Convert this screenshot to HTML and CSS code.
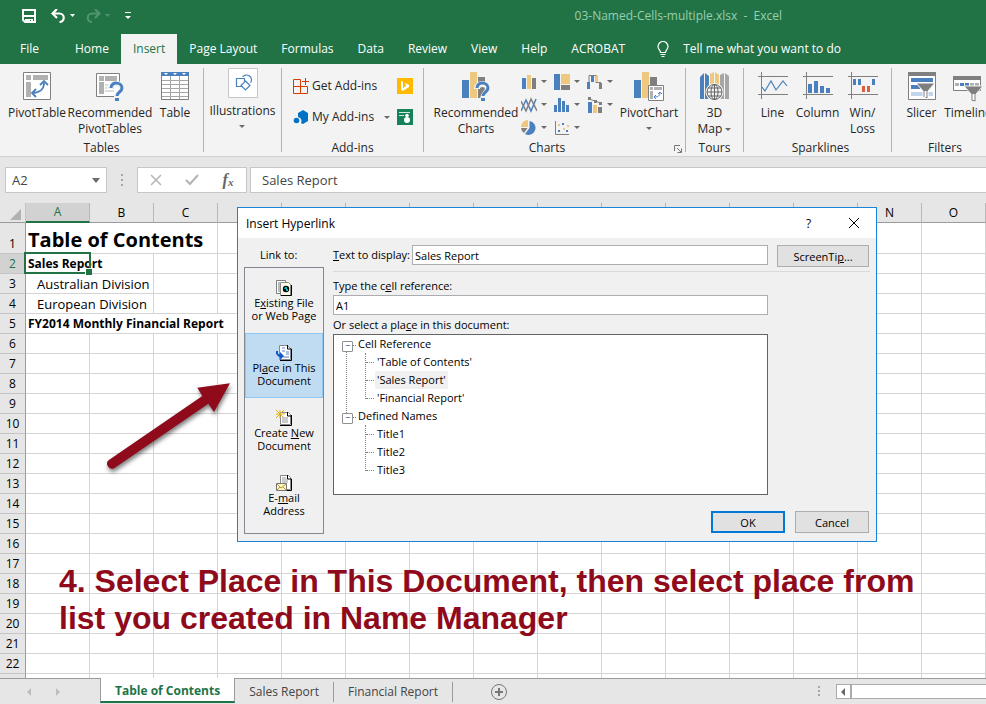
FILE: index.html
```html
<!DOCTYPE html>
<html lang="en">
<head>
<meta charset="utf-8">
<title>03-Named-Cells-multiple.xlsx - Excel</title>
<link rel="stylesheet" href="styles.css">
</head>
<body>
<div class="app">
<header class="titlebar">
  <div class="quick">
    <button aria-label="Save"><svg width="14" height="14"><path d="M1 1h12v12H3l-2-2z" fill="none" stroke="#fff" stroke-width="2"/><path d="M1 7h12" stroke="#fff" stroke-width="2"/><path d="M3 14v-4h8v4h-2v-3H8v3z" fill="#fff"/></svg></button>
    <button class="undo" aria-label="Undo"><svg width="25" height="14"><path d="M6 0L1.500 4.500 6 9M2 4.500h6.500a4 4 0 0 1 0 8.500" fill="none" stroke="#fff" stroke-width="2.200"/><path d="M19 5h5l-2.500 3z" fill="#fff"/></svg></button>
    <button class="redo" aria-label="Redo"><svg width="25" height="14"><path d="M9 0l4.500 4.500L9 9M13 4.500H6a4 4 0 0 0 0 8.500" fill="none" stroke="#4f9470" stroke-width="2.200"/><path d="M19 5h5l-2.500 3z" fill="#4f9470"/></svg></button>
    <button class="more" aria-label="Customize Quick Access Toolbar"><svg width="6" height="8"><path d="M0 .5h6" stroke="#fff"/><path d="M0 4h6L3 7z" fill="#fff"/></svg></button>
  </div>
  <div class="doc-name">03-Named-Cells-multiple.xlsx&nbsp; -&nbsp; Excel</div>
</header>
<nav class="tabs">
  <button class="file">File</button><button>Home</button><button class="active">Insert</button><button>Page Layout</button><button>Formulas</button><button>Data</button><button>Review</button><button>View</button><button>Help</button><button>ACROBAT</button>
  <button class="tell"><svg width="12" height="17" fill="none" stroke="#fff" stroke-width="1.200"><path d="M3.500 11.500C3.500 9 1 8.500 1 5.500a5 5 0 0 1 10 0c0 3-2.500 3.500-2.500 6zM3.500 13.500h5M4.500 15.500h3"/></svg>Tell me what you want to do</button>
</nav>

<section class="ribbon">
  <div class="group tables">
    <div class="tools">
      <button class="big w58"><svg width="28" height="28"><path d="M.5.5h27v27H.5z" fill="#fff" stroke="#7f7f7f"/><path d="M3 3h5v5H3zM10 3h15v5H10zM3 10h5v15H3z" fill="#b1b1b1"/><path d="M10 21c8-1 11-4 11-10M13 17l-4 4 4 4M17 13l4-4 4 4" fill="none" stroke="#4a80bd" stroke-width="1.800"/></svg><span>PivotTable</span></button>
      <button class="big w88"><svg width="28" height="29"><path d="M.5 1.500h23v23H.500z" fill="#fff" stroke="#7f7f7f"/><path d="M3 4h5v5H3zM9 4h12v5H9zM3 10h5v12H3z" fill="#b1b1b1"/><path d="M9 13h9M9 16h9M9 19h9" stroke="#bbb"/><path d="M14 17c0-7 12-7 12 0 0 4-5 3-5 8" fill="none" stroke="#f3f3f3" stroke-width="6"/><path d="M15 16c0-7 11-6 11 0 0 4-5 4-5 8" fill="none" stroke="#4a80bd" stroke-width="3"/><path d="M19 26h4v3h-4z" fill="#4a80bd"/></svg><span>Recommended<br>PivotTables</span></button>
      <button class="big w42"><svg width="28" height="28"><path d="M.5.5h27v27H.500z" fill="#fff" stroke="#7f7f7f"/><path d="M1 8.500h26M1 12.500h26M1 16.500h26M1 20.500h26M1 24.500h26M9.500 4v23M18.500 4v23" stroke="#a6a6a6"/><path d="M0 0h28v4H0z" fill="#4a80bd"/><path d="M3 1h4L5 3zM12 1h4l-2 2zM21 1h4l-2 2z" fill="#fff"/></svg><span>Table</span></button>
    </div>
    <div class="caption">Tables</div>
  </div>
  <div class="group illus">
    <div class="tools">
      <button class="big boxed"><svg width="30" height="30"><path d="M.5.5h29v29H.5z" fill="#fff" stroke="#c6c6c6"/><g fill="none" stroke="#4a80bd" stroke-width="1.200"><path d="M14 18.500H8.500v-8h8v3M14.500 9a5 5 0 1 1 8 6M17.500 13l4.500 4.500-4.500 4.500-4.500-4.500z"/></g></svg><span>Illustrations<i class="caret block"></i></span></button>
    </div>
  </div>
  <div class="group addins">
    <div class="tools">
      <div class="rows">
        <button><svg width="16" height="16" fill="none" stroke="#d83b01"><path d="M.5 1.500h7v14h-7zM.5 8.500h14v7h-7M12.500 0v7M9 3.500h7"/></svg>Get Add-ins</button>
        <button><svg width="16" height="16"><path d="M5 4l5-3 5 3v8l-5 3-2-1a4 4 0 0 0-3-6z" fill="#0072c6"/><circle cx="3.500" cy="11.500" r="2.800" fill="#0072c6"/></svg>My Add-ins<i class="caret"></i></button>
      </div>
      <div class="rows icons">
        <button aria-label="Bing Maps"><svg width="16" height="16"><path d="M0 0h16v16H0z" fill="#ffb900"/><path d="M4 3l2 1v6l3-2-1-3 4 2v2l-6 4-2-1z" fill="#fff"/></svg></button>
        <button aria-label="People Graph"><svg width="16" height="16"><path d="M0 0h16v16H0z" fill="#168259"/><path d="M2 3.500h11M2 6.500h5" stroke="#cfe8dc"/><circle cx="10" cy="6.500" r="1.800" fill="#fff"/><circle cx="10" cy="11" r="3" fill="#fff"/></svg></button>
      </div>
    </div>
    <div class="caption">Add-ins</div>
  </div>
  <div class="group charts">
    <div class="tools">
      <button class="big w90"><svg width="28" height="29"><path d="M0 8h7v18H0z" fill="#4a80bd"/><path d="M8 0h7v26H8z" fill="#edc87e"/><path d="M16 5h7v21h-7z" fill="#7f7f7f"/><path d="M15 17c0-7 11-6 11 0 0 4-5 3-5 12" fill="none" stroke="#f3f3f3" stroke-width="6"/><path d="M15 16c0-7 11-6 11 0 0 4-5 4-5 8" fill="none" stroke="#4a80bd" stroke-width="3"/><path d="M19 26h4v3h-4z" fill="#4a80bd"/></svg><span>Recommended<br>Charts</span></button>
      <div class="chart-grid">
        <button aria-label="Column chart"><svg width="16" height="16"><path d="M1 4h4v11H1z" fill="#4a80bd"/><path d="M6 1h4v14H6z" fill="#edc87e"/><path d="M11 4h4v11h-4z" fill="#7f7f7f"/></svg><i class="caret"></i></button>
        <button aria-label="Hierarchy chart"><svg width="16" height="16"><path d="M0 0h6v16H0z" fill="#4a80bd"/><path d="M7 0h9v10H7z" fill="#edc87e"/><path d="M7 11h9v5H7z" fill="#7f7f7f"/></svg><i class="caret"></i></button>
        <button aria-label="Waterfall chart"><svg width="16" height="16"><path d="M0 8h3v7H0zM4 1h3v7H4z" fill="#4a80bd"/><path d="M8 1h3v8H8z" fill="#edc87e"/><path d="M12 9h3v6h-3z" fill="#7f7f7f"/><path d="M2 8V1.500h7M9 8.500h5" stroke="#7f7f7f" fill="none"/></svg><i class="caret"></i></button>
        <button aria-label="Line chart"><svg width="16" height="16" fill="none"><path d="M0 14L5 3l5 11 5-12" stroke="#4a80bd" stroke-width="1.500"/><path d="M0 4l5 10 5-12 6 12" stroke="#7f7f7f" stroke-width="1.500"/></svg><i class="caret"></i></button>
        <button aria-label="Statistic chart"><svg width="16" height="16"><path d="M0 8h3v7H0zM4 1h3v14H4zM8 4h3v11H8zM12 8h3v7h-3z" fill="#4a80bd"/></svg><i class="caret"></i></button>
        <button aria-label="Combo chart"><svg width="16" height="16"><path d="M1 5h4v11H1z" fill="#4a80bd"/><path d="M6 8h4v8H6z" fill="#edc87e"/><path d="M11 10h4v6h-4z" fill="#7f7f7f"/><path d="M2 2l6 2 6 2" stroke="#7f7f7f"/><path d="M1 0h3v3H1zM7 3h3v3H7zM12 5h3v3h-3z" fill="#7f7f7f"/></svg><i class="caret"></i></button>
        <button aria-label="Pie chart"><svg width="16" height="16"><path d="M8.500 1v7L4 14a7 7 0 1 0 4.500-13z" fill="#4a80bd"/><path d="M7 0v7H0a7 7 0 0 1 7-7z" fill="#edc87e"/><path d="M0 8h6.500L3 13a7 7 0 0 1-3-5z" fill="#7f7f7f"/></svg><i class="caret"></i></button>
        <button aria-label="Scatter chart"><svg width="16" height="16"><path d="M1.500 1v13.500H15" stroke="#7f7f7f" fill="none"/><path d="M4 4h2v2H4zM9 8h2v2H9zM13 5h2v2h-2z" fill="#edc87e"/><path d="M4 10h2v2H4zM8 3h2v2H8zM12 10h2v2h-2z" fill="#4a80bd"/></svg><i class="caret"></i></button>
      </div>
      <button class="big w58"><svg width="30" height="29"><path d="M0 8h7v18H0z" fill="#4a80bd"/><path d="M8 0h7v26H8z" fill="#edc87e"/><path d="M16 5h7v8h-7z" fill="#7f7f7f"/><path d="M14.500 13.500h15v15h-15z" fill="#fff" stroke="#7f7f7f"/><path d="M16 15h3v3h-3zM20 15h8v3h-8zM16 19h3v8h-3z" fill="#b1b1b1"/><path d="M20 25c4 0 6-1 6-5M22 23l-2 2 2 2M24 22l2-2 2 2" fill="none" stroke="#4a80bd"/></svg><span>PivotChart<i class="caret block"></i></span></button>
    </div>
    <div class="caption">Charts</div>
    <button class="launcher" aria-label="See All Charts"><svg width="8" height="8" fill="none" stroke="#777"><path d="M.5 6V.5H6M3 3l4 4M7.500 3.500v4h-4"/></svg></button>
  </div>
  <div class="group tours">
    <div class="tools">
      <button class="big w58"><svg width="30" height="29"><path d="M0 5l4-4v26H0zM5 1l4 3v23H5z" fill="#4a80bd"/><path d="M10 2l4-2v27h-4zM15 0l4 3v24h-4z" fill="#edc87e"/><path d="M20 3l4-2v26h-4zM25 1l4 3v23h-4z" fill="#a6a6a6"/><circle cx="14.500" cy="20" r="9" fill="#f3f3f3"/><g fill="none" stroke="#666"><circle cx="14.500" cy="20" r="7.500"/><ellipse cx="14.500" cy="20" rx="3.500" ry="7.500"/><path d="M7 20h15M8 16h13M8 24h13M14.500 12v16"/></g></svg><span>3D<br>Map <i class="caret"></i></span></button>
    </div>
    <div class="caption">Tours</div>
  </div>
  <div class="group spark">
    <div class="tools">
      <button class="big w45"><svg width="30" height="28"><path d="M0 4.500h30M0 22.500h30M3.500 0v27" stroke="#7f7f7f"/><path d="M4 15l3 4 6-10 5 9 7-9 4 5" fill="none" stroke="#4a80bd" stroke-width="1.200"/></svg><span>Line</span></button>
      <button class="big w45"><svg width="30" height="28"><path d="M0 4.500h30M0 22.500h30M3.500 0v27" stroke="#7f7f7f"/><path d="M5 12h4v9H5zM11 9h4v12h-4zM17 14h4v7h-4zM23 16h4v5h-4z" fill="#4a80bd"/></svg><span>Column</span></button>
      <button class="big w45"><svg width="30" height="28"><path d="M0 4.500h30M0 22.500h30M3.500 0v27" stroke="#7f7f7f"/><path d="M5 7h3v6H5zM10 7h3v6h-3zM24 7h3v6h-3z" fill="#4a80bd"/><path d="M14 14h3v6h-3zM19 14h3v6h-3z" fill="#d9603f"/></svg><span>Win/<br>Loss</span></button>
    </div>
    <div class="caption">Sparklines</div>
  </div>
  <div class="group filters">
    <div class="tools">
      <button class="big w45"><svg width="28" height="28"><path d="M.5.5h27v27H.500z" fill="#fff" stroke="#7f7f7f"/><path d="M0 0h28v4H0z" fill="#7f7f7f"/><path d="M3 6h22v4H3zM3 13h9v4H3z" fill="#4a80bd"/><path d="M3 20h22v4H3z" fill="#c3d5ea"/><path d="M8 11h19l-7 8v8l-5-2v-6z" fill="#7f7f7f" stroke="#fff"/><path d="M16.500 19h2v6h-2z" fill="#fff"/></svg><span>Slicer</span></button>
      <button class="big w48"><svg width="30" height="30"><path d="M.5 4.500h27v14H.500z" fill="#fff" stroke="#7f7f7f"/><path d="M0 4h28v4H0z" fill="#7f7f7f"/><path d="M2 11h4v3H2zM17 11h4v3h-4zM22 11h4v3h-4z" fill="#b1b1b1"/><path d="M7 11h4v3H7zM12 11h4v3h-4z" fill="#4a80bd"/><path d="M11 14h19l-7 8v8l-5-1v-7z" fill="#7f7f7f" stroke="#f3f3f3"/><path d="M19.500 22h2v6h-2z" fill="#fff"/></svg><span>Timeline</span></button>
    </div>
    <div class="caption">Filters</div>
  </div>
</section>

<section class="formula">
  <div class="name-box"><input aria-label="Name Box" value="A2"><button aria-label="Names"><i class="caret wide"></i></button></div>
  <svg class="grip" width="3" height="12"><path d="M0 0h2v2H0zM0 5h2v2H0zM0 10h2v2H0z" fill="#a6a6a6"/></svg>
  <div class="fx-box">
    <button aria-label="Cancel entry"><svg width="12" height="12"><path d="M1 1l10 10M11 1L1 11" stroke="#b4b4b4" stroke-width="1.500"/></svg></button>
    <button aria-label="Enter"><svg width="14" height="12"><path d="M1 6l4 4 8-9" fill="none" stroke="#b4b4b4" stroke-width="2"/></svg></button>
    <button class="fx" aria-label="Insert Function">f<small>x</small></button>
  </div>
  <input class="formula-input" aria-label="Formula Bar" value="Sales Report">
</section>

<main class="sheet">
<table>
<thead><tr><th class="corner"><svg width="11" height="11"><path d="M11 0v11H0z" fill="#b1b1b1"/></svg></th>
<th class="sel">A</th><th>B</th><th>C</th><th></th><th></th>
<th></th><th></th><th></th><th></th><th></th>
<th></th><th></th><th></th><th>N</th><th>O</th></tr></thead>
<tbody>
<tr class="first"><th>1</th><td colspan="3" class="title">Table of Contents</td><td><td> <td><td><td><td><td> <td><td><td><td><td></tr>
<tr><th class="sel">2</th><td colspan="2" class="bold current">Sales Report<span class="cursor"></span></td><td><td><td> <td><td><td><td><td> <td><td><td><td><td></tr>
<tr><th>3</th><td colspan="2" class="indent">Australian Division</td><td><td><td> <td><td><td><td><td> <td><td><td><td><td></tr>
<tr><th>4</th><td colspan="2" class="indent">European Division</td><td><td><td> <td><td><td><td><td> <td><td><td><td><td></tr>
<tr><th>5</th><td colspan="4" class="bold">FY2014 Monthly Financial Report</td><td> <td><td><td><td><td> <td><td><td><td><td></tr>
<tr><th>6</th><td><td><td><td><td> <td><td><td><td><td> <td><td><td><td><td></tr>
<tr><th>7</th><td><td><td><td><td> <td><td><td><td><td> <td><td><td><td><td></tr>
<tr><th>8</th><td><td><td><td><td> <td><td><td><td><td> <td><td><td><td><td></tr>
<tr><th>9</th><td><td><td><td><td> <td><td><td><td><td> <td><td><td><td><td></tr>
<tr><th>10</th><td><td><td><td><td> <td><td><td><td><td> <td><td><td><td><td></tr>
<tr><th>11</th><td><td><td><td><td> <td><td><td><td><td> <td><td><td><td><td></tr>
<tr><th>12</th><td><td><td><td><td> <td><td><td><td><td> <td><td><td><td><td></tr>
<tr><th>13</th><td><td><td><td><td> <td><td><td><td><td> <td><td><td><td><td></tr>
<tr><th>14</th><td><td><td><td><td> <td><td><td><td><td> <td><td><td><td><td></tr>
<tr><th>15</th><td><td><td><td><td> <td><td><td><td><td> <td><td><td><td><td></tr>
<tr><th>16</th><td><td><td><td><td> <td><td><td><td><td> <td><td><td><td><td></tr>
<tr><th>17</th><td><td><td><td><td> <td><td><td><td><td> <td><td><td><td><td></tr>
<tr><th>18</th><td><td><td><td><td> <td><td><td><td><td> <td><td><td><td><td></tr>
<tr><th>19</th><td><td><td><td><td> <td><td><td><td><td> <td><td><td><td><td></tr>
<tr><th>20</th><td><td><td><td><td> <td><td><td><td><td> <td><td><td><td><td></tr>
<tr><th>21</th><td><td><td><td><td> <td><td><td><td><td> <td><td><td><td><td></tr>
<tr><th>22</th><td><td><td><td><td> <td><td><td><td><td> <td><td><td><td><td></tr>
<tr><th></th><td><td><td><td><td> <td><td><td><td><td> <td><td><td><td><td></tr>
</tbody>
</table>

<p class="note">4. Select Place in This Document, then select place from<br>list you created in Name Manager</p>
<svg class="arrow" width="140" height="110"><path d="M8.900 89L102.300 25l-5-8.300 32.700-4.400L114 41l-5.700-8.300L14.500 97A4.900 4.900 0 0 1 8.900 89z" fill="#8f0a1a"/></svg>

<form class="dialog">
  <div class="dlg-title"><span>Insert Hyperlink</span><button type="button" class="help" aria-label="Help">?</button><button type="button" aria-label="Close"><svg width="12" height="12"><path d="M1 1l10 10M11 1L1 11" stroke="#000"/></svg></button></div>
  <div class="dlg-body">
    <div class="link-col">
      <div class="link-label">Link to:</div>
      <div class="link-list">
        <button type="button"><svg width="16" height="16"><path d="M.5.5h9v13h-9z" fill="#fff" stroke="#808080"/><path d="M2 3h2M2 5h2M2 7h2M2 9h2M2 11h2" stroke="#777"/><path d="M4.500 2.500h8l2 2v11h-10z" fill="#fffbe8" stroke="#888"/><path d="M15.500 5v10.500H5" stroke="#000" fill="none"/><circle cx="10" cy="9" r="3.200" fill="#000"/><path d="M9 7h2v2h1v2h-2V9H8z" fill="#16b8c8"/></svg>E<u>x</u>isting File<br>or Web Page</button>
        <button type="button" class="chosen"><svg width="16" height="16"><path d="M3.500.5h8l3 3v11h-11z" fill="#fff" stroke="#888"/><path d="M15.500 4v11.500H4M11.500 0v4h4" stroke="#000" fill="none"/><path d="M6 3h3M6 6h3M10 7h3M10 9h3M7 12h6" stroke="#5b7ec8"/><path d="M0 6h2v3h2V7l4 4-4 4v-3H3l-3-3z" fill="#1757c8"/></svg>Pl<u>a</u>ce in This<br>Document</button>
        <button type="button"><svg width="16" height="16"><path d="M4.500 2.500h8l2 2v10h-10z" fill="#fff" stroke="#888"/><path d="M15.500 5v10.500H4M11.500 2v4h4" stroke="#000" fill="none"/><path d="M6 8h6M6 10h6M6 12h6" stroke="#999"/><path d="M0 0l8 8M8 0L0 8M4 0v8M0 4h9" stroke="#d9b018"/></svg>Create <u>N</u>ew<br>Document</button>
        <button type="button"><svg width="16" height="16"><path d="M4.500.5h8l2 2v12h-10z" fill="#fff" stroke="#888"/><path d="M15.500 4v11.500H4M11.500 0v4h4" stroke="#000" fill="none"/><path d="M6 3h4M6 5h6M6 7h6" stroke="#999"/><path d="M.5 8.500h10v7H.5z" fill="#fff4c0" stroke="#777"/><path d="M1 9l4 4 5-4M1 15l3-3M10 15l-3-3" fill="none" stroke="#bb9a35"/></svg>E-<u>m</u>ail<br>Address</button>
      </div>
    </div>
    <div class="main-col">
      <div class="display-row"><label for="disp"><u>T</u>ext to display:</label><input id="disp" value="Sales Report"><button type="button">ScreenTi<u>p</u>...</button></div>
      <div class="fields">
        <label for="ref">Type the c<u>e</u>ll reference:</label>
        <input id="ref" value="A1">
        <div class="place-label" id="place">Or select a pla<u>c</u>e in this document:</div>
        <ul class="tree" role="tree" aria-labelledby="place">
          <li role="treeitem" class="branch"><span>Cell Reference</span>
            <ul role="group"><li role="treeitem"><span>'Table of Contents'</span></li><li role="treeitem"><span class="picked">'Sales Report'</span></li><li role="treeitem"><span>'Financial Report'</span></li></ul></li>
          <li role="treeitem" class="branch"><span>Defined Names</span>
            <ul role="group"><li role="treeitem"><span>Title1</span></li><li role="treeitem"><span>Title2</span></li><li role="treeitem"><span>Title3</span></li></ul></li>
        </ul>
      </div>
      <div class="actions"><button type="button" class="ok">OK</button><button type="button">Cancel</button></div>
    </div>
  </div>
</form>
</main>

<footer class="sheetbar">
  <div class="nav"><svg width="34" height="8"><path d="M4 0v8L0 4zM29 0v8l4-4z" fill="#bdbdbd"/></svg></div>
  <button class="active">Table of Contents</button><button>Sales Report</button><button>Financial Report</button>
  <button class="add" aria-label="New sheet"><svg width="16" height="16" fill="none" stroke="#777"><circle cx="8" cy="8" r="7.500"/><path d="M4 8h8M8 4v8" stroke-width="2"/></svg></button>
  <div class="scroll"><svg width="3" height="12"><path d="M0 0h2v2H0zM0 4h2v2H0zM0 8h2v2H0z" fill="#a6a6a6"/></svg><button aria-label="Scroll left"><svg width="5" height="8"><path d="M4 0v8L0 4z" fill="#666"/></svg></button><div class="track"></div></div>
</footer>
</div>
</body>
</html>
```
FILE: styles.css
```css
* { box-sizing: border-box; }
body { margin: 0; font: 12px/16px "Open Sans", "Noto Sans", sans-serif; color: #262626; }
button { margin: 0; padding: 0; border: 0; background: none; font: inherit; color: inherit; white-space: nowrap; }
input { font: inherit; color: inherit; min-width: 0; }
svg { display: block; flex: none; }
.app { display: flex; flex-direction: column; height: 100vh; overflow: hidden; background: #e6e6e6; }

.titlebar { display: flex; height: 34px; background: #217346; flex: none; }
.quick { display: flex; align-items: center; padding: 0 0 2px 22px; }
.undo { margin-left: 15px; }
.redo { margin-left: 10px; }
.more { margin-left: 14px; }
.doc-name { margin-left: auto; padding: 8px 204px 0 0; color: #97cfaf; white-space: nowrap; }

.tabs { display: flex; height: 30px; background: #217346; color: #fff; flex: none; }
.tabs button { padding: 0 12px; }
.tabs .file { padding: 0 24px 0 20px; }
.tabs .active { background: #f3f3f3; color: #217346; }
.tabs .tell { display: flex; align-items: center; gap: 14px; padding: 0 0 0 20px; }

.ribbon { display: flex; height: 93px; background: #f3f3f3; border-bottom: 1px solid #d0d0d0; overflow: hidden; flex: none; padding: 4px 0; }
.group { position: relative; display: flex; flex-direction: column; flex: none; border-right: 1px solid #b3b3b3; }
.tools { display: flex; height: 72px; flex: none; }
.caption { text-align: center; line-height: 16px; }
.tables { width: 204px; padding-left: 8px; }
.tables .caption { margin-right: 8px; }
.illus { width: 78px; }
.addins { width: 142px; padding-left: 11px; }
.addins .caption { margin-right: 11px; }
.charts { width: 262px; padding-left: 7px; }
.charts .caption { margin-right: 22px; }
.tours { width: 58px; }
.spark { width: 148px; padding-left: 6px; }
.filters { width: 112px; padding-left: 7px; }
.filters .caption { margin-right: 12px; }
.big { display: flex; flex-direction: column; align-items: center; justify-content: flex-start; height: 71px; padding-top: 4px; gap: 3px; }
.big > svg { height: 30px; }
.w42 { width: 42px; }
.w45 { width: 45px; }
.w48 { width: 48px; }
.w58 { width: 58px; }
.w88 { width: 88px; }
.w90 { width: 90px; }
.boxed { width: 77px; padding-top: 0; gap: 5px; }
.caret { display: inline-block; border: 3px solid transparent; border-top-color: #6a6a6a; border-bottom: 0; vertical-align: middle; }
.caret.block { display: block; margin: 6px auto 0; width: 6px; }
.caret.wide { border-width: 5px 4px 0; }
.rows { display: flex; flex-direction: column; gap: 15px; padding-top: 10px; width: 104px; }
.rows button { display: flex; align-items: center; gap: 3px; height: 16px; }
.rows .caret { margin-left: 7px; }
.rows.icons { width: 16px; }
.chart-grid { display: grid; grid-template-columns: repeat(3, 33px); grid-auto-rows: 23px; padding: 2px 0 0; align-content: start; }
.chart-grid button { display: flex; align-items: center; gap: 4px; }
.launcher { position: absolute; right: 3px; bottom: -1px; }

.formula { display: flex; height: 46px; padding: 10px 0 10px 5px; flex: none; font-size: 13px; color: #444; }
.name-box { display: flex; width: 102px; background: #fff; border: 1px solid #c6c6c6; }
.name-box input { flex: 1; border: 0; padding: 0 6px; }
.name-box button { display: flex; align-items: center; justify-content: center; width: 20px; }
.grip { margin: 7px 13px 0 14px; }
.fx-box { display: flex; width: 110px; background: #fff; border: 1px solid #c6c6c6; }
.fx-box button { flex: 1; display: flex; align-items: center; justify-content: center; }
.fx-box .fx { font: italic bold 16px "Liberation Serif", serif; color: #666; }
.fx small { font-size: 11px; padding-top: 4px; }
.formula-input { flex: 1; margin-left: 3px; border: 1px solid #c6c6c6; border-right: 0; padding: 0 11px; }

.sheet { position: relative; flex: 1; background: #fff; overflow: hidden; }
.sheet table { border-collapse: separate; border-spacing: 0; table-layout: fixed; width: 986px; color: #000; font-size: 13px; line-height: 18px; }
.sheet th { padding: 0; height: 20px; background: #e6e6e6; font-weight: 400; font-size: 12px; border-right: 1px solid #b8b8b8; border-bottom: 1px solid #c4c4c4; }
thead th { width: 64px; border-bottom-color: #9b9b9b !important; }
thead .corner { width: 26px; border-right-color: #c4c4c4; }
.corner svg { margin: 3px 0 0 10px; }
.sheet tbody th { border-right-color: #9b9b9b; vertical-align: bottom; line-height: 18px; }
.sheet th.sel { background: #d2d2d2; color: #217346; }
.sheet thead th.sel { border-bottom: 2px solid #217346 !important; }
.sheet td { height: 20px; padding: 0 0 0 2px; border-right: 1px solid #d4d4d4; border-bottom: 1px solid #d4d4d4; white-space: nowrap; }
.sheet .first td, .sheet .first th { height: 31px; }
.sheet .title { font-size: 20px; font-weight: 700; line-height: 26px; padding-top: 3px; }
.sheet .bold { font-weight: 700; font-size: 12px; }
.sheet .indent { padding-left: 11px; }
.current { position: relative; }
.cursor { position: absolute; left: -2px; top: -2px; width: 67px; height: 22px; border: 2px solid #217346; }
.cursor::after { content: ""; position: absolute; right: -3px; bottom: -3px; width: 6px; height: 6px; background: #217346; border: solid #fff; border-width: 1px 0 0 1px; }

.note { position: absolute; left: 59px; top: 360px; margin: 0; font: bold 32px/37px "Liberation Sans", Arial, sans-serif; color: #8f0a1a; white-space: nowrap; }
.arrow { position: absolute; left: 100px; top: 168px; filter: drop-shadow(1px 3px 2px rgba(0,0,0,.5)); z-index: 2; }

.dialog { position: absolute; left: 237px; top: 4px; width: 640px; background: #f0f0f0; border: 1px solid #1883d7; font-size: 11px; line-height: 13px; color: #000; }
.dlg-title { display: flex; align-items: center; height: 30px; background: #fff; padding-left: 8px; font-size: 12px; }
.dlg-title span { flex: 1; }
.dlg-title button { width: 45px; display: flex; justify-content: center; }
.dlg-body { display: flex; gap: 9px; padding: 7px 6px 7px 6px; }
.link-col { width: 80px; }
.link-label { height: 22px; padding: 3px 0 0 16px; }
.link-list { height: 267px; border: 1px solid #828790; }
.link-list button { display: block; width: 100%; height: 65px; line-height: 13px; }
.link-list svg { margin: 0 auto; }
.link-list .chosen { background: #c0dcf3; box-shadow: inset 0 0 0 1px #90c8f6; }
.main-col { flex: 1; }
.display-row { display: flex; height: 27px; align-items: flex-start; border-bottom: 1px solid #dadada; }
.display-row label { width: 79px; padding-top: 3px; white-space: nowrap; }
.dialog input { height: 20px; border: 1px solid #abadb3; padding: 0 2px; background: #fff; }
.display-row input { flex: 1; }
.display-row button { width: 92px; height: 22px; margin: 0 1px 0 9px; background: #e1e1e1; border: 1px solid #adadad; }
.fields { display: flex; flex-direction: column; margin-right: 102px; }
.fields label { height: 23px; padding-top: 7px; }
.place-label { height: 19px; padding-top: 3px; }
.tree { height: 161px; background: #fff; border: 1px solid #646464; }
.tree, .tree ul { list-style: none; margin: 0; padding: 0; line-height: 18px; }
.tree ul { margin-left: 31px; border-left: 1px dotted #808080; }
.branch { position: relative; }
.branch > span { padding-left: 24px; }
.branch::before { content: "−"; position: absolute; z-index: 1; left: 8px; top: 6px; width: 9px; height: 9px; border: 1px solid #919191; border-radius: 1px; background: #fff; color: #2a3f8f; font-size: 9px; line-height: 7px; text-align: center; }
.branch::after { content: ""; position: absolute; left: 12px; top: 10px; bottom: -6px; width: 9px; border: 1px dotted #808080; border-width: 1px 0 0 1px; }
.branch:last-child::after { height: 1px; bottom: auto; }
.tree ul li { position: relative; padding-left: 9px; height: 18px; }
.tree ul li::before { content: ""; position: absolute; left: 0; top: 9px; width: 8px; border-top: 1px dotted #808080; }
.tree ul li:last-child::after { content: ""; position: absolute; left: -1px; top: 10px; width: 1px; height: 8px; background: #fff; }
.tree ul span { display: inline-block; padding: 0 2px; }
.picked { background: #f0f0f0; }
.actions { display: flex; justify-content: flex-end; gap: 10px; margin: 16px 1px 0 0; }
.actions button { width: 74px; height: 22px; background: #e1e1e1; border: 1px solid #adadad; }
.actions .ok { border: 2px solid #0078d7; }

.sheetbar { display: flex; height: 26px; border-top: 1px solid #9b9b9b; background: #e6e6e6; flex: none; color: #444; }
.nav { width: 100px; padding: 9px 0 0 27px; flex: none; }
.sheetbar > button { padding: 0 14px; }
.sheetbar > .active { margin-top: -1px; height: 25px; padding-top: 3px; background: #fff; border: 1px solid #9b9b9b; border-width: 0 1px 2px; border-bottom-color: #217346; color: #217346; font-weight: 700; }
.sheetbar > button:not(.active):not(.add) { border-right: 1px solid #9b9b9b; margin: 3px 0 2px; }
.sheetbar > .add { padding: 0 38px; }
.scroll { display: flex; align-items: center; margin-left: auto; width: 168px; }
.scroll button { width: 15px; height: 15px; margin-left: 15px; border: 1px solid #ababab; background: #fff; display: flex; align-items: center; justify-content: center; }
.track { flex: 1; height: 15px; border: 1px solid #ababab; border-right: 0; background: #fff; }
```
